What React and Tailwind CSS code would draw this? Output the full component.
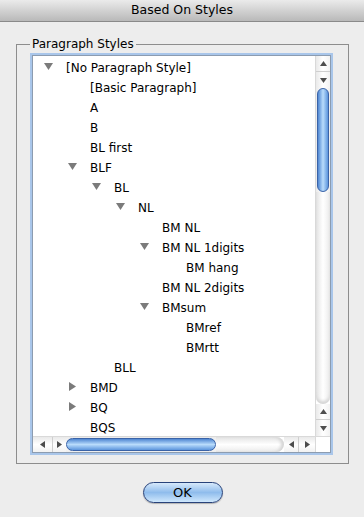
const ROWS = [
  { label: '[No Paragraph Style]', level: 0, state: 'open' },
  { label: '[Basic Paragraph]', level: 1 },
  { label: 'A', level: 1 },
  { label: 'B', level: 1 },
  { label: 'BL first', level: 1 },
  { label: 'BLF', level: 1, state: 'open' },
  { label: 'BL', level: 2, state: 'open' },
  { label: 'NL', level: 3, state: 'open' },
  { label: 'BM NL', level: 4 },
  { label: 'BM NL 1digits', level: 4, state: 'open' },
  { label: 'BM hang', level: 5 },
  { label: 'BM NL 2digits', level: 4 },
  { label: 'BMsum', level: 4, state: 'open' },
  { label: 'BMref', level: 5 },
  { label: 'BMrtt', level: 5 },
  { label: 'BLL', level: 2 },
  { label: 'BMD', level: 1, state: 'closed' },
  { label: 'BQ', level: 1, state: 'closed' },
  { label: 'BQS', level: 1 },
]

function Disclosure({ state }) {
  if (state === 'open') {
    return (
      <svg width="9" height="7" viewBox="0 0 9 7" className="mt-[-4px]">
        <path d="M0 0 H9 L4.5 7 Z" fill="#7b7b7b" />
      </svg>
    )
  }
  if (state === 'closed') {
    return (
      <svg width="7" height="9" viewBox="0 0 7 9" className="ml-[1px] mt-[-4px]">
        <path d="M0 0 V9 L7 4.5 Z" fill="#7b7b7b" />
      </svg>
    )
  }
  return null
}

function Arrow({ dir }) {
  const d = {
    up: 'M0 5 L3.5 0 L7 5 Z',
    down: 'M0 0 L7 0 L3.5 5 Z',
    left: 'M5 0 L5 7 L0 3.5 Z',
    right: 'M0 0 L0 7 L5 3.5 Z',
  }[dir]
  const vert = dir === 'up' || dir === 'down'
  return (
    <svg width={vert ? 7 : 5} height={vert ? 5 : 7} viewBox={vert ? '0 0 7 5' : '0 0 5 7'}>
      <path d={d} fill="#4d4d4d" />
    </svg>
  )
}

function VArrows() {
  return (
    <div className="flex flex-col bg-gradient-to-r from-[#e9e9e9] via-white to-[#f2f2f2]">
      <div className="h-[16px] flex items-center justify-center border-b border-[#cfcfcf]"><Arrow dir="up" /></div>
      <div className="h-[16px] flex items-center justify-center"><Arrow dir="down" /></div>
    </div>
  )
}

function HArrows() {
  return (
    <div className="flex bg-gradient-to-b from-[#e9e9e9] via-white to-[#f2f2f2]">
      <div className="w-[20px] flex items-center justify-center border-r border-[#cfcfcf]"><Arrow dir="left" /></div>
      <div className="w-[13px] flex items-center justify-center"><Arrow dir="right" /></div>
    </div>
  )
}

export default function App() {
  return (
    <div className="w-[364px] h-[517px] bg-[#ededed] flex flex-col text-black font-['Lucida_Grande','DejaVu_Sans',sans-serif]">
      <div className="h-[22px] shrink-0 bg-gradient-to-b from-[#ebebeb] to-[#b9b9b9] border-b border-[#8a8a8a] flex items-center justify-center text-[12.5px]">
        Based On Styles
      </div>

      <div className="mt-[22px] ml-[16px] w-[333px] h-[420px] border border-[#8d8d8d] flex flex-col">
        <div className="h-0 flex">
          <span className="ml-[13px] -mt-[8px] h-[15px] px-[2px] bg-[#ededed] text-[12px] leading-[15px]">Paragraph Styles</span>
        </div>

        <div className="mt-[10px] ml-[15px] w-[299px] h-[398px] border border-[#8c9cb0] bg-white shadow-[0_0_0_2px_#a9c6ea] grid grid-cols-[1fr_15px] grid-rows-[1fr_16px]">
          <div className="overflow-hidden text-[12px] pt-[2px]">
            {ROWS.map((r, i) => (
              <div key={i} className="h-[20px] flex items-center whitespace-nowrap" style={{ paddingLeft: 11 + r.level * 24 }}>
                <div className="w-[22px] h-[20px] flex items-center">
                  <Disclosure state={r.state} />
                </div>
                <span>{r.label}</span>
              </div>
            ))}
          </div>

          <div className="flex flex-col border-l border-[#d9d9d9]">
            <VArrows />
            <div className="h-[104px] px-[1px] bg-gradient-to-r from-[#eaeaea] via-white to-[#eeeeee]">
              <div className="h-full rounded-full border border-[#3a63a8] bg-gradient-to-r from-[#4f86d1] via-[#b9dcfb] to-[#5c95dc]" />
            </div>
            <div className="flex-1 rounded-b-[8px] bg-gradient-to-r from-[#e4e4e4] via-white to-[#ececec] shadow-[inset_0_-3px_3px_#d6d6d6]" />
            <VArrows />
          </div>

          <div className="flex border-t border-[#d9d9d9]">
            <HArrows />
            <div className="w-[150px] py-[1px] bg-gradient-to-b from-[#eaeaea] via-white to-[#eeeeee]">
              <div className="h-full rounded-full border border-[#3a63a8] bg-gradient-to-b from-[#4f86d1] via-[#b9dcfb] to-[#5c95dc]" />
            </div>
            <div className="flex-1 rounded-r-[8px] bg-gradient-to-b from-[#e4e4e4] via-white to-[#ececec] shadow-[inset_-3px_0_3px_#d6d6d6]" />
            <div className="flex bg-gradient-to-b from-[#e9e9e9] via-white to-[#f2f2f2]">
              <div className="w-[15px] flex items-center justify-center border-r border-[#cfcfcf]"><Arrow dir="left" /></div>
              <div className="w-[16px] flex items-center justify-center"><Arrow dir="right" /></div>
            </div>
          </div>
          <div className="bg-white border-t border-l border-[#d9d9d9]" />
        </div>
      </div>

      <div className="mt-[18px] flex justify-center">
        <button className="ml-[1px] w-[80px] h-[21px] rounded-full border border-[#28427a] bg-gradient-to-b from-[#d7e9fb] via-[#8fbcec] to-[#cfe7fc] text-[13px] leading-none shadow-[0_1px_1px_rgba(0,0,0,0.25)]">
          OK
        </button>
      </div>
    </div>
  )
}
